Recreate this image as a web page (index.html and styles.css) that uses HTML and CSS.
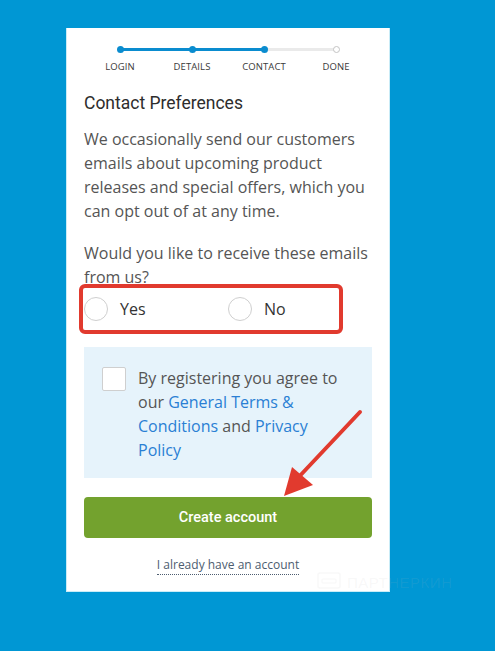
FILE: index.html
```html
<!DOCTYPE html>
<html lang="en">
<head>
<meta charset="utf-8">
<title>Contact Preferences</title>
<link rel="stylesheet" href="styles.css">
</head>
<body>
<div class="page">
  <div class="card">
    <ol class="stepper">
      <li class="step done"><span class="dot"></span><span class="label">LOGIN</span></li>
      <li class="step done"><span class="dot"></span><span class="label">DETAILS</span></li>
      <li class="step done"><span class="dot"></span><span class="label">CONTACT</span></li>
      <li class="step todo"><span class="dot"></span><span class="label">DONE</span></li>
    </ol>

    <h2 class="title">Contact Preferences</h2>
    <p class="text">We occasionally send our customers emails about upcoming product releases and special offers, which you can opt out of at any time.</p>
    <p class="text question">Would you like to receive these emails from us?</p>

    <div class="radios">
      <label class="radio"><span class="circle"></span><span>Yes</span></label>
      <label class="radio"><span class="circle"></span><span>No</span></label>
    </div>

    <div class="terms">
      <span class="checkbox"></span>
      <p class="terms-text">By registering you agree to our <a href="#">General Terms &amp; Conditions</a> and <a href="#">Privacy Policy</a></p>
    </div>

    <button class="btn">Create account</button>

    <div class="login-row"><a href="#" class="login">I already have an account</a></div>

    <div class="highlight"></div>
    <svg class="arrow" width="100" height="100" viewBox="0 0 100 100" aria-hidden="true">
      <line x1="90" y1="13" x2="25" y2="82" stroke="#e13a2e" stroke-width="4" stroke-linecap="round"/>
      <polygon points="14,97 22,68 43,86" fill="#e13a2e"/>
    </svg>
  </div>
  <div class="watermark">
    <svg width="24" height="20" viewBox="0 0 24 20" aria-hidden="true">
      <rect x="1" y="1" width="22" height="15" rx="2" fill="none" stroke="currentColor" stroke-width="1.5"/>
      <rect x="5" y="7" width="14" height="4" rx="1" fill="none" stroke="currentColor" stroke-width="1.2"/>
    </svg>
    <span>ПАРТНЕРКИН</span>
  </div>
</div>
</body>
</html>
```

FILE: styles.css
```css
* { box-sizing: border-box; }

html, body {
  margin: 0;
  padding: 0;
}

body {
  background: #0097d4;
  width: 495px;
  height: 651px;
  overflow: hidden;
  font-family: "Open Sans", "Liberation Sans", sans-serif;
}

.page {
  position: relative;
  padding: 28px 0 0 66px;
}

.card {
  position: relative;
  width: 324px;
  height: 564px;
  background: #fff;
  border: 1px solid #c9ecf7;
  border-top: 0;
  padding: 14px 17px 0 17px;
}

/* stepper */
.stepper {
  list-style: none;
  margin: 0;
  padding: 0;
  display: grid;
  grid-template-columns: repeat(4, 1fr);
}

.step {
  position: relative;
  display: flex;
  flex-direction: column;
  align-items: center;
}

.step + .step::before {
  content: "";
  position: absolute;
  top: 6px;
  left: -50%;
  width: 100%;
  height: 3px;
  background: #0a8ccf;
}

.step.todo::before {
  background: #eaeaea;
}

.dot {
  position: relative;
  z-index: 1;
  width: 7px;
  height: 7px;
  margin-top: 4px;
  border-radius: 50%;
  background: #0a8ccf;
}

.todo .dot {
  background: #fff;
  border: 1px solid #c4c4c4;
}

.label {
  margin-top: 8px;
  font-size: 9.5px;
  line-height: 12px;
  color: #3a3a3a;
  letter-spacing: 0.1px;
}

.title {
  margin: 18px 0 0;
  font-family: Roboto, "Open Sans", sans-serif;
  font-weight: 400;
  font-size: 17.5px;
  line-height: 24px;
  color: #2d2d2d;
}

.text {
  margin: 12px 0 0;
  font-size: 16px;
  line-height: 24px;
  color: #555;
}

.question {
  margin-top: 18px;
}

.radios {
  display: flex;
  margin-top: 8px;
  height: 24px;
}

.radio {
  display: flex;
  align-items: center;
  gap: 12px;
  width: 144px;
  font-size: 16px;
  color: #333;
}

.circle {
  width: 24px;
  height: 24px;
  border-radius: 50%;
  border: 1px solid #cfcfcf;
  background: #fff;
}

.terms {
  display: flex;
  gap: 12px;
  margin-top: 26px;
  background: #e6f3fb;
  padding: 19px 18px 16px 18px;
}

.checkbox {
  flex: none;
  width: 24px;
  height: 24px;
  margin-top: 1px;
  background: #fff;
  border: 1px solid #cfcfcf;
  border-radius: 2px;
}

.terms-text {
  margin: 0;
  font-size: 16px;
  line-height: 24px;
  color: #555;
}

.terms-text a {
  color: #2a7fd4;
  text-decoration: none;
}

.btn {
  display: block;
  width: 100%;
  height: 41px;
  margin-top: 19px;
  border: 0;
  border-radius: 4px;
  background: #73a22e;
  color: #fff;
  font-family: Roboto, "Open Sans", sans-serif;
  font-weight: 500;
  font-size: 14.5px;
  cursor: pointer;
}

.login-row {
  margin-top: 17px;
  text-align: center;
  line-height: 16px;
}

.login {
  font-size: 12px;
  color: #4d5d70;
  text-decoration: none;
  border-bottom: 1px dotted #4d5d70;
  padding-bottom: 1px;
}

/* annotation overlays */
.highlight {
  position: absolute;
  left: 12px;
  top: 256px;
  width: 264px;
  height: 50px;
  border: 4px solid #e13a2e;
  border-radius: 6px;
}

.arrow {
  position: absolute;
  left: 203px;
  top: 371px;
}

.watermark {
  position: absolute;
  left: 317px;
  top: 572px;
  display: flex;
  align-items: center;
  gap: 6px;
  color: rgba(190, 190, 190, 0.1);
  font-family: "Liberation Sans", sans-serif;
  font-size: 15px;
  letter-spacing: 0.5px;
}
```
